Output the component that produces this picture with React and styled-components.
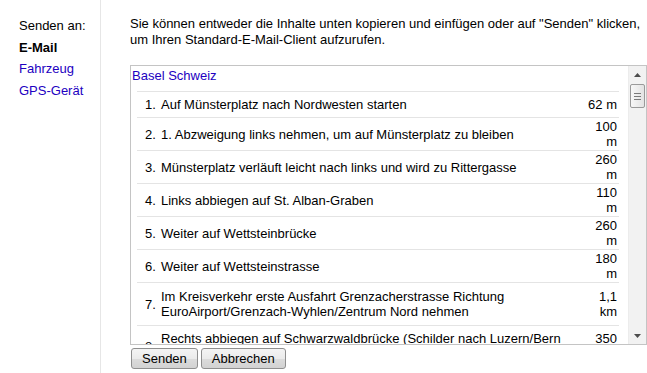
import styled, { createGlobalStyle } from "styled-components"

const Global = createGlobalStyle`
  html, body {
    margin: 0;
    padding: 0;
    background: #fff;
  }
  body {
    font-family: "Liberation Sans", Arial, sans-serif;
    font-size: 13px;
    color: #000;
  }
`

const Page = styled.div`
  display: flex;
  width: 647px;
  height: 373px;
  overflow: hidden;
`

const Sidebar = styled.div`
  width: 81px;
  flex-shrink: 0;
  padding: 15px 0 0 19px;
  border-right: 1px solid #e6e6e6;
  line-height: 21.5px;
`

const SideLabel = styled.div`
  color: ${p => (p.active ? "#000" : p.link ? "#2200c1" : "#000")};
  font-weight: ${p => (p.active ? 700 : 400)};
  cursor: ${p => (p.link ? "pointer" : "default")};
`

const Main = styled.div`
  flex: 1;
  min-width: 0;
  padding: 16px 0 0 29px;
  display: flex;
  flex-direction: column;
`

const Intro = styled.p`
  margin: 0 0 17px 0;
  line-height: 16px;
  white-space: nowrap;
`

const Box = styled.div`
  display: flex;
  height: 278px;
  border: 1px solid #c4c4c4;
`

const Content = styled.div`
  flex: 1;
  overflow: hidden;
`

const Title = styled.div`
  color: #2200c1;
  padding: 2px 2px 0 1px;
  height: 23px;
  line-height: 15px;
`

const Steps = styled.table`
  border-collapse: collapse;
  margin: 0 9px 0 6px;
  width: calc(100% - 15px);
  font-size: 13px;

  td {
    border-top: 1px solid #e4e4e4;
    line-height: 15px;
    vertical-align: middle;
  }
`

const Num = styled.td`
  width: 16px;
  padding: 5px 0 5px 8px;
  white-space: nowrap;
`

const Desc = styled.td`
  padding: ${p => (p.long ? "6px 8px 6px 0" : "5px 8px 5px 0")};
`

const Dist = styled.td`
  width: 30px;
  padding: 1px 2px 1px 0;
  text-align: right;
`

const Scrollbar = styled.div`
  width: 17px;
  flex-shrink: 0;
  background: #f2f2f2;
  border-left: 1px solid #ececec;
  display: flex;
  flex-direction: column;
`

const Arrow = styled.div`
  height: 17px;
  display: flex;
  align-items: center;
  justify-content: center;
`

const Thumb = styled.div`
  margin: 1px 1px 0 1px;
  height: 22px;
  border: 1px solid #9a9a9a;
  border-radius: 2px;
  background: linear-gradient(to right, #f7f7f7, #e3e3e3);
  display: flex;
  align-items: center;
  justify-content: center;
`

const Track = styled.div`
  flex: 1;
`

const Buttons = styled.div`
  display: flex;
  gap: 3px;
  margin-top: 3px;
  padding-left: 1px;
`

const Button = styled.button`
  height: 21px;
  padding: 0 10px;
  font-family: "Liberation Sans", Arial, sans-serif;
  font-size: 13px;
  color: #000;
  border: 1px solid #8f8f8f;
  border-radius: 3px;
  background: linear-gradient(to bottom, #f4f4f4 0%, #ebebeb 50%, #dcdcdc 51%, #d2d2d2 100%);
  line-height: 19px;
`

const steps = [
  ["1.", "Auf Münsterplatz nach Nordwesten starten", "62 m"],
  ["2.", "1. Abzweigung links nehmen, um auf Münsterplatz zu bleiben", "100 m"],
  ["3.", "Münsterplatz verläuft leicht nach links und wird zu Rittergasse", "260 m"],
  ["4.", "Links abbiegen auf St. Alban-Graben", "110 m"],
  ["5.", "Weiter auf Wettsteinbrücke", "260 m"],
  ["6.", "Weiter auf Wettsteinstrasse", "180 m"],
  ["7.", "Im Kreisverkehr erste Ausfahrt Grenzacherstrasse Richtung EuroAirport/Grenzach-Wyhlen/Zentrum Nord nehmen", "1,1 km", true],
  ["8.", "Rechts abbiegen auf Schwarzwaldbrücke (Schilder nach Luzern/Bern Zürich)", "350 m"],
  ["9.", "Weiter auf A2", "4,2 km"],
]

const UpIcon = () => (
  <svg width="7" height="4" viewBox="0 0 7 4">
    <path d="M0 4 L3.5 0 L7 4 Z" fill="#4d4d4d" />
  </svg>
)

const DownIcon = () => (
  <svg width="7" height="4" viewBox="0 0 7 4">
    <path d="M0 0 L3.5 4 L7 0 Z" fill="#4d4d4d" />
  </svg>
)

const Grip = () => (
  <svg width="7" height="7" viewBox="0 0 7 7">
    <path d="M0 0.5 H7 M0 3.5 H7 M0 6.5 H7" stroke="#7a7a7a" strokeWidth="1" />
  </svg>
)

export default function App() {
  return (
    <>
      <Global />
      <Page>
        <Sidebar>
          <SideLabel>Senden an:</SideLabel>
          <SideLabel active>E-Mail</SideLabel>
          <SideLabel link>Fahrzeug</SideLabel>
          <SideLabel link>GPS-Gerät</SideLabel>
        </Sidebar>

        <Main>
          <Intro>
            Sie können entweder die Inhalte unten kopieren und einfügen oder auf "Senden" klicken,
            <br />
            um Ihren Standard-E-Mail-Client aufzurufen.
          </Intro>

          <Box>
            <Content>
              <Title>Basel Schweiz</Title>
              <Steps>
                <tbody>
                  {steps.map(([n, text, dist, long]) => (
                    <tr key={n}>
                      <Num>{n}</Num>
                      <Desc long={long}>{text}</Desc>
                      <Dist>{dist}</Dist>
                    </tr>
                  ))}
                </tbody>
              </Steps>
            </Content>
            <Scrollbar>
              <Arrow><UpIcon /></Arrow>
              <Thumb><Grip /></Thumb>
              <Track />
              <Arrow><DownIcon /></Arrow>
            </Scrollbar>
          </Box>

          <Buttons>
            <Button>Senden</Button>
            <Button>Abbrechen</Button>
          </Buttons>
        </Main>
      </Page>
    </>
  )
}
